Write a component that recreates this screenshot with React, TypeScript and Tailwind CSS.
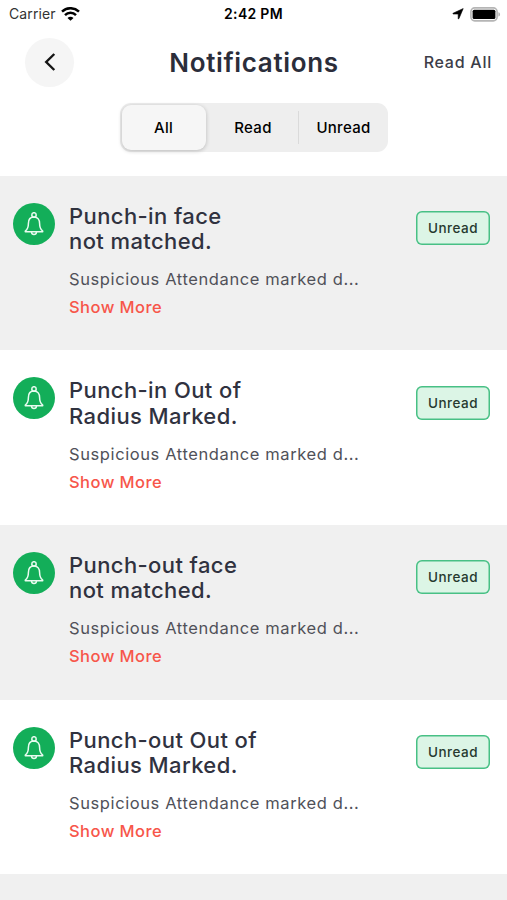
import React, { useState } from "react";

interface Notification {
  id: number;
  title: string[];
  body: string;
}

const NOTIFICATIONS: Notification[] = [
  { id: 1, title: ["Punch-in face", "not matched."], body: "Suspicious Attendance marked d..." },
  { id: 2, title: ["Punch-in Out of", "Radius Marked."], body: "Suspicious Attendance marked d..." },
  { id: 3, title: ["Punch-out face", "not matched."], body: "Suspicious Attendance marked d..." },
  { id: 4, title: ["Punch-out Out of", "Radius Marked."], body: "Suspicious Attendance marked d..." },
];

const WifiIcon = () => (
  <svg width="19" height="15" viewBox="0 0 19 15" fill="none" stroke="#000" strokeWidth="2.5">
    <path d="M1 4.600C5.8.1 13.2.1 18 4.600" />
    <path d="M4 8.100c3.1-3 7.900-3 11 0" />
    <path d="M9.500 13.800L6.500 10.900c1.700-1.500 4.300-1.500 6 0z" fill="#000" stroke="none" />
  </svg>
);

const LocationIcon = () => (
  <svg width="12" height="12" viewBox="0 0 12 12">
    <path
      d="M11.200.6L6.900 10.700c-.2.4-.7.300-.7-.2V6H1.300c-.5 0-.6-.6-.2-.8z"
      fill="#000"
      stroke="#000"
      strokeWidth=".6"
      strokeLinejoin="round"
    />
  </svg>
);

const BatteryIcon = () => (
  <svg width="31" height="15" viewBox="0 0 31 15">
    <rect x=".9" y=".9" width="26.200" height="13" rx="3.800" fill="#fff" stroke="#b5b5b5" strokeWidth="1.600" />
    <rect x="2.600" y="2.800" width="22.800" height="9.200" rx="1.500" fill="#000" />
    <path d="M28.400 5.200c2.200.5 2.200 3.900 0 4.400z" fill="#b5b5b5" />
  </svg>
);

const BellIcon = () => (
  <svg
    width="20"
    height="24"
    viewBox="0 0 20 24"
    fill="none"
    stroke="#e9fbf0"
    strokeWidth="1.500"
    strokeLinecap="round"
    strokeLinejoin="round"
  >
    <circle cx="10" cy="2.900" r="2.200" />
    <path d="M10 5.100c-3.800 0-5.600 2.600-5.600 6.400 0 4.200-.5 5.600-3.100 7.500v.8h17.400V19c-2.600-1.900-3.100-3.300-3.100-7.500 0-3.800-1.800-6.400-5.600-6.400z" />
    <path d="M7.500 20c.2 3.300 4.800 3.300 5 0" />
  </svg>
);

const StatusBar = () => (
  <div className="grid h-7 grid-cols-3 items-center px-[6px] text-[14px] leading-none text-black">
    <div className="flex items-center gap-[5px] pl-[3px]">
      <span className="tracking-[0.1px] text-[#333]">Carrier</span>
      <WifiIcon />
    </div>
    <span className="text-center font-semibold tracking-[0.3px]">2:42 PM</span>
    <div className="flex items-center justify-end gap-[6px]">
      <LocationIcon />
      <BatteryIcon />
    </div>
  </div>
);

const Header = () => (
  <header className="grid h-[68px] grid-cols-[1fr_auto_1fr] items-center pr-[15px] pl-[16px]">
    <button className="ml-[9px] flex size-[49px] items-center justify-center rounded-full bg-[#f5f5f5]">
      <svg width="12" height="18" viewBox="0 0 12 18" fill="none" stroke="#151515" strokeWidth="2.400">
        <path d="M10.300 1L2.200 9l8.100 8" />
      </svg>
    </button>
    <h1 className="text-[26px] font-semibold tracking-[0.65px] text-[#2b2d3a]">Notifications</h1>
    <button className="justify-self-end text-[16px] font-medium tracking-[0.75px] text-[#3c3d48]">Read All</button>
  </header>
);

const TABS = ["All", "Read", "Unread"];

const Tabs = () => {
  const [active, setActive] = useState("All");

  return (
    <div className="mx-auto mt-[7px] grid h-[49px] w-[268px] grid-cols-[84px_92px_1fr] items-center rounded-[11px] bg-[#eeeeee] p-[2px] text-[15px] font-medium tracking-[0.3px] text-black">
      {TABS.map((tab) => (
        <button
          key={tab}
          onClick={() => setActive(tab)}
          className={
            tab === active
              ? "h-[45px] rounded-[9px] bg-[#f6f6f6] pt-px shadow-[0_1px_4px_rgba(0,0,0,0.22)]"
              : "h-[33px] border-[#dadada] pt-px pl-[3px] last:border-l"
          }
        >
          {tab}
        </button>
      ))}
    </div>
  );
};

const NotificationRow = ({ item }: { item: Notification }) => (
  <li className="flex h-[174.700px] items-start pt-[27px] pr-[17px] pl-[13px] odd:bg-[#f0f0f0]">
    <div className="flex size-[42px] shrink-0 items-center justify-center rounded-full bg-[#13ae59]">
      <BellIcon />
    </div>
    <div className="ml-[14px] flex-1 pt-px">
      <h2 className="text-[22px] leading-[25.500px] font-medium tracking-[0.4px] text-[#30323f]">
        {item.title.map((line) => (
          <span key={line} className="block">
            {line}
          </span>
        ))}
      </h2>
      <p className="mt-[13.500px] text-[16.500px] leading-[22px] tracking-[0.6px] text-[#505159]">{item.body}</p>
      <button className="mt-[5px] block text-[16.500px] leading-[24px] font-medium tracking-[0.45px] text-[#f7564a]">
        Show More
      </button>
    </div>
    <span className="mt-[8.500px] flex h-[34px] w-[74px] shrink-0 items-center justify-center rounded-[6px] bg-[#dcf5e6] text-[13.500px] font-medium tracking-[0.5px] text-[#26392f] shadow-[inset_0_0_0_1.5px_#48c085]">
      Unread
    </span>
  </li>
);

export default function App() {
  return (
    <div className="h-[900px] overflow-hidden bg-white font-['Inter','Liberation_Sans',sans-serif]">
      <StatusBar />
      <Header />
      <Tabs />
      <ul className="mt-[23.600px]">
        {NOTIFICATIONS.map((item) => (
          <NotificationRow key={item.id} item={item} />
        ))}
        <li className="h-[174.700px] bg-[#f0f0f0]" />
      </ul>
    </div>
  );
}
